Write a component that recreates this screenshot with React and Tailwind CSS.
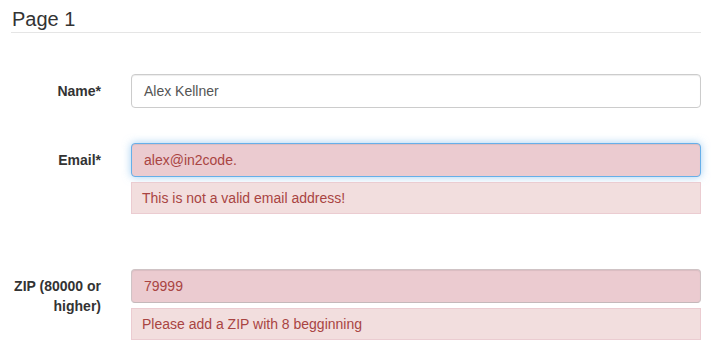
export default function App() {
  return (
    <div className="w-[714px] h-[354px] bg-white overflow-hidden" style={{ fontFamily: '"Liberation Sans", Arial, sans-serif' }}>
      <div className="ml-[11px] w-[690px]">
        <div className="pt-[6px] pl-[1px] text-[20px] leading-[26px] text-[#333]">Page 1</div>
        <div className="h-0 border-t border-[#e5e5e5]"></div>
        <div className="pt-[41px]">
          <div className="flex">
            <div className="w-[90px] pt-[7px] text-right text-[14px] leading-[20px] font-bold text-[#333]">Name*</div>
            <div className="ml-[30px] flex-1">
              <div className="h-[34px] rounded-[4px] border border-[#ccc] bg-white px-[12px] flex items-center text-[14px] text-[#555] shadow-[inset_0_1px_1px_rgba(0,0,0,0.075)]">Alex Kellner</div>
            </div>
          </div>
          <div className="flex mt-[35px]">
            <div className="w-[90px] pt-[7px] text-right text-[14px] leading-[20px] font-bold text-[#333]">Email*</div>
            <div className="ml-[30px] flex-1">
              <div className="h-[34px] rounded-[4px] border border-[#66afe9] bg-[#ebcbd0] px-[12px] flex items-center text-[14px] text-[#a94442] shadow-[inset_0_1px_1px_rgba(0,0,0,0.075),0_0_8px_rgba(102,175,233,0.6)]">alex@in2code.</div>
              <div className="mt-[5px] h-[32px] border border-[#ebccd1] bg-[#f2dede] px-[10px] flex items-center text-[14px] text-[#a94442]">This is not a valid email address!</div>
            </div>
          </div>
          <div className="flex mt-[55px]">
            <div className="w-[90px] pt-[7px] text-right text-[14px] leading-[20px] font-bold text-[#333]">ZIP (80000 or<br />higher)</div>
            <div className="ml-[30px] flex-1">
              <div className="h-[34px] rounded-[4px] border border-[#cfc3c5] border-b-[#c4b8ba] bg-[#ebcbd0] px-[12px] flex items-center text-[14px] text-[#a94442] shadow-[inset_0_1px_1px_rgba(0,0,0,0.075)]">79999</div>
              <div className="mt-[5px] h-[32px] border border-[#ebccd1] bg-[#f2dede] px-[10px] flex items-center text-[14px] text-[#a94442]">Please add a ZIP with 8 begginning</div>
            </div>
          </div>
        </div>
      </div>
    </div>
  );
}
